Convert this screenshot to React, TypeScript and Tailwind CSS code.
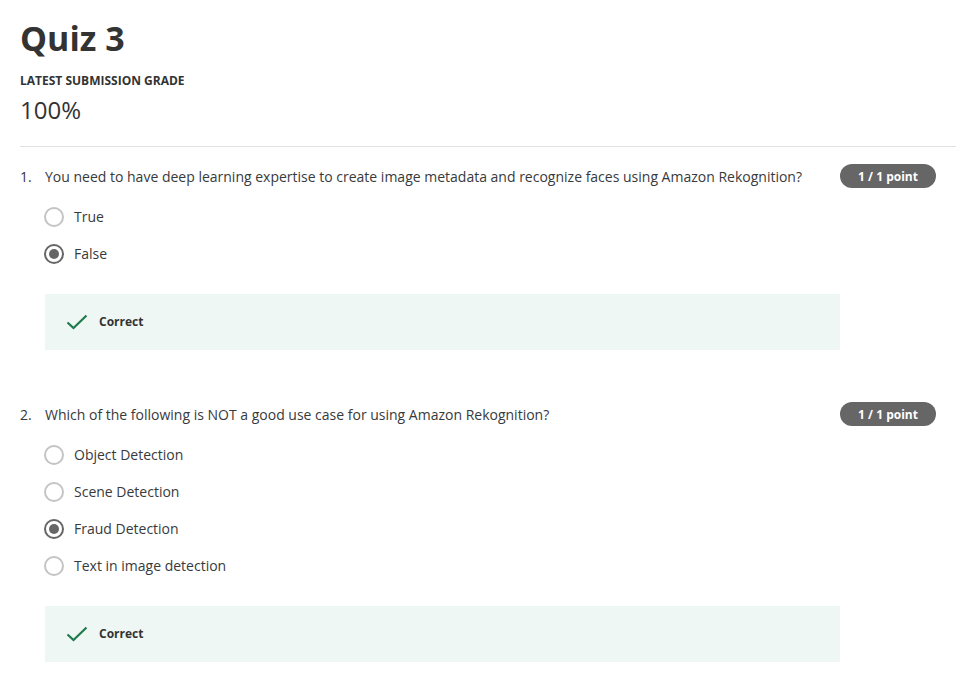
import React from "react";

interface Question {
  number: number;
  text: string;
  options: string[];
  selected: number;
}

const questions: Question[] = [
  {
    number: 1,
    text: "You need to have deep learning expertise to create image metadata and recognize faces using Amazon Rekognition?",
    options: ["True", "False"],
    selected: 1,
  },
  {
    number: 2,
    text: "Which of the following is NOT a good use case for using Amazon Rekognition?",
    options: ["Object Detection", "Scene Detection", "Fraud Detection", "Text in image detection"],
    selected: 2,
  },
];

function Radio({ checked }: { checked: boolean }) {
  return checked ? (
    <span className="flex h-[20px] w-[20px] items-center justify-center rounded-full border-2 border-[#666666]">
      <span className="h-[10px] w-[10px] rounded-full bg-[#666666]" />
    </span>
  ) : (
    <span className="h-[20px] w-[20px] rounded-full border-2 border-[#c4c4c4]" />
  );
}

function QuestionBlock({ q }: { q: Question }) {
  return (
    <div className="mt-[17px] pr-[20px] [&+&]:mt-[52px]">
      <div className="flex h-[24px] items-center text-[14px] text-[#373a3c]">
        <span className="w-[25px]">{q.number}.</span>
        <span className="flex-1">{q.text}</span>
        <span className="flex h-[24px] w-[96px] items-center justify-center rounded-full bg-[#666666] pt-px text-[12px] font-bold text-white">
          1 / 1 point
        </span>
      </div>
      <div className="mt-[10px] pl-[24px]">
        {q.options.map((opt, i) => (
          <div key={opt} className="flex h-[37px] items-center gap-[10px] text-[14px] text-[#373a3c]">
            <Radio checked={i === q.selected} />
            <span>{opt}</span>
          </div>
        ))}
      </div>
      <div className="ml-[25px] mt-[22px] flex h-[56px] w-[795px] items-center bg-[#eff7f4] pl-[21px]">
        <svg width="22" height="16" viewBox="0 0 22 16" fill="none">
          <path d="M1.5 8.5 L7.5 14 L20.5 1.5" stroke="#1f7a4f" strokeWidth="2.2" />
        </svg>
        <span className="ml-[11px] text-[12px] font-bold text-[#333333]">Correct</span>
      </div>
    </div>
  );
}

export default function App() {
  return (
    <div className="min-h-screen bg-white pl-[20px] pr-[16px] pt-[17px] font-['Open_Sans',sans-serif]">
      <h1 className="text-[34px] font-bold leading-[42px] text-[#333333]">Quiz 3</h1>
      <div className="mt-[14px] text-[12px] font-bold uppercase leading-[16px] text-[#333333]">
        Latest Submission Grade
      </div>
      <div className="mt-[5px] text-[24px] leading-[32px] text-[#333333]">100%</div>
      <div className="mt-[20px] h-px bg-[#e1e1e1]" />
      {questions.map((q) => (
        <QuestionBlock key={q.number} q={q} />
      ))}
    </div>
  );
}
